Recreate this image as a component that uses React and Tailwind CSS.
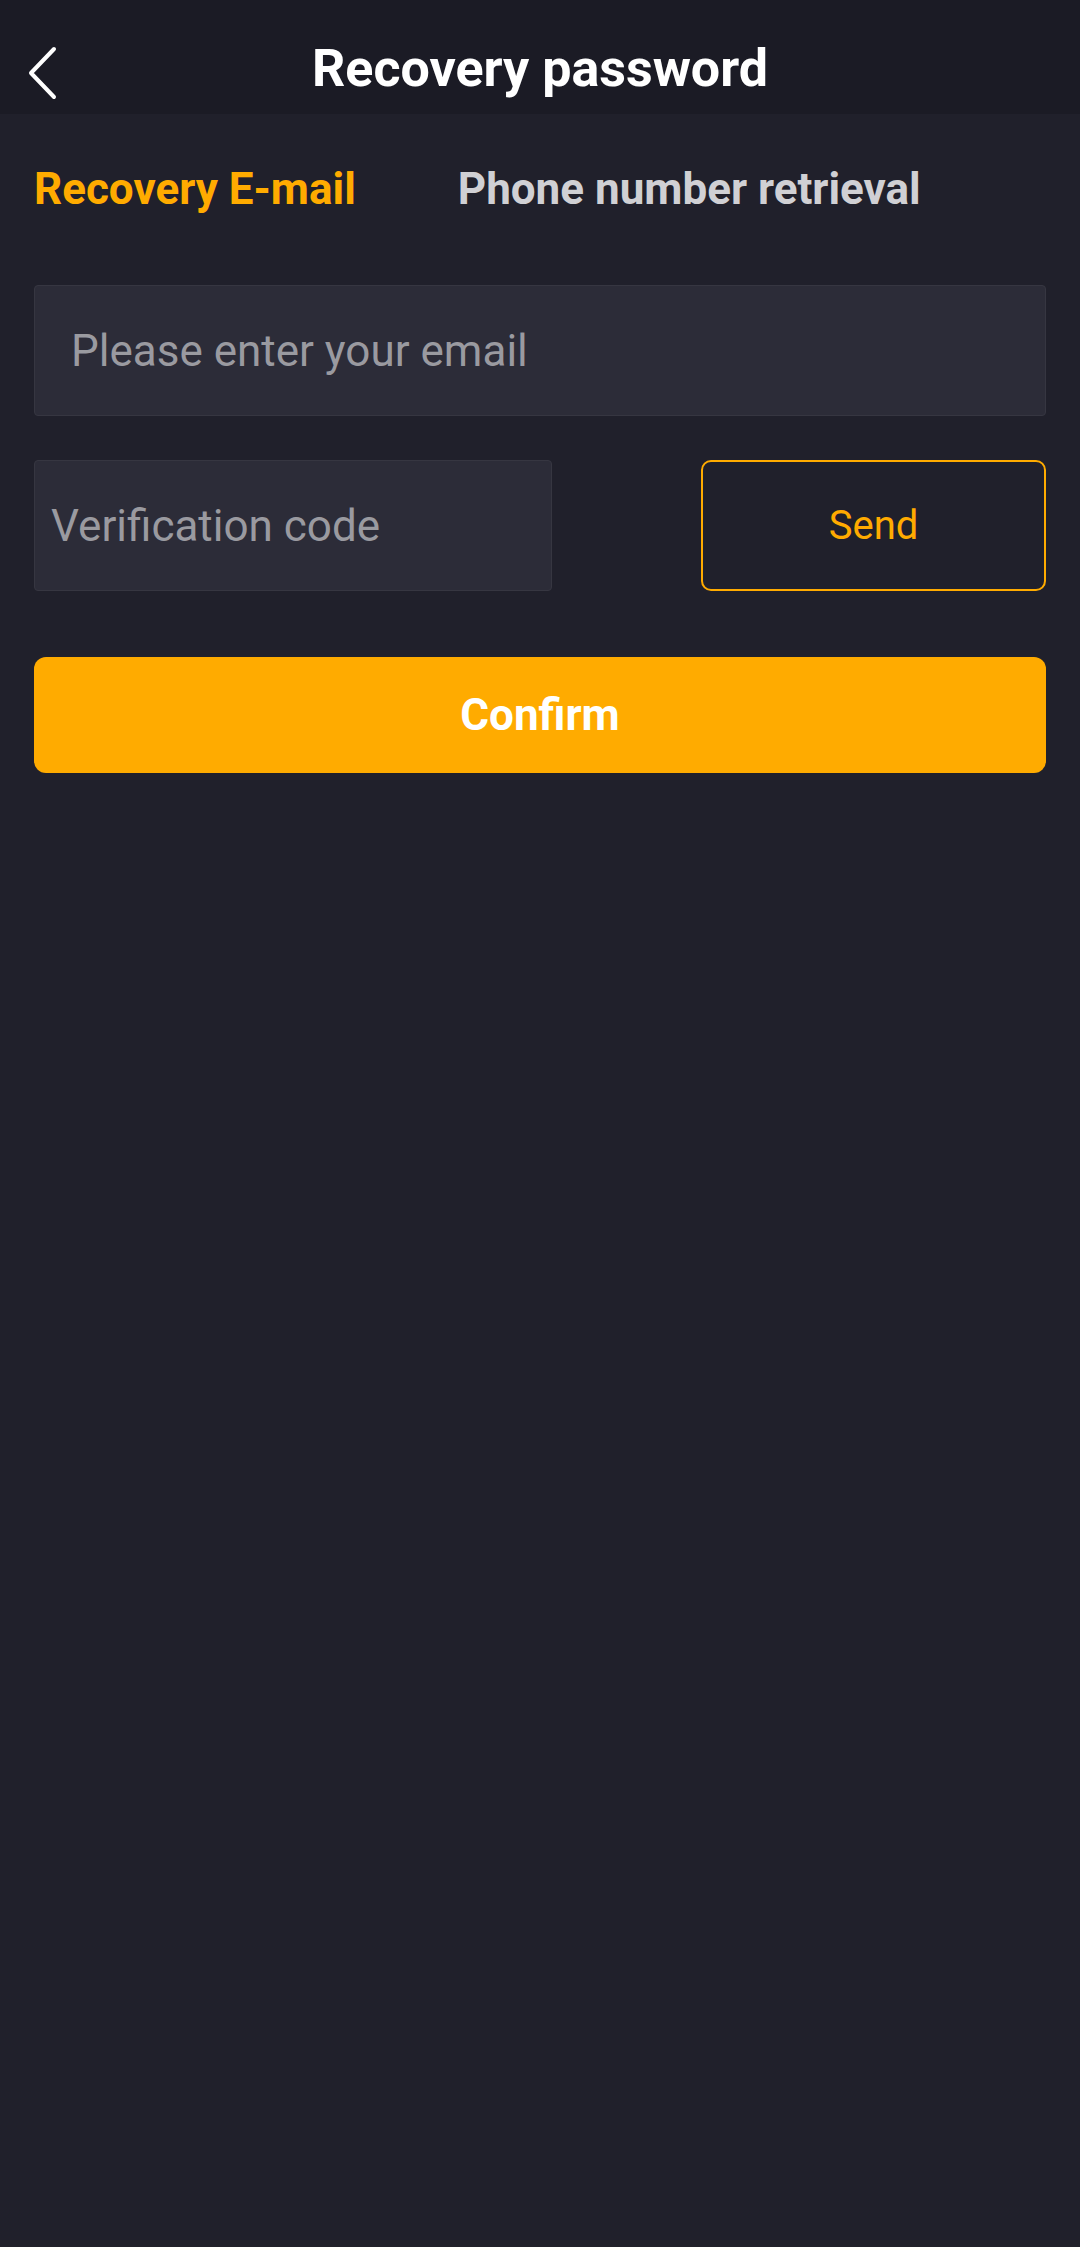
import React, { useState } from 'react';

const App = () => {
  const [tab, setTab] = useState('email');

  return (
    <div className="min-h-[2247px] w-[1080px] bg-[#20202b]" style={{ fontFamily: 'Roboto, "Liberation Sans", sans-serif' }}>
      {/* Header */}
      <div className="relative flex h-[114px] items-center justify-center bg-[#1b1b25] pt-[24px]">
        <button className="absolute left-[22px] top-[42px] p-1" aria-label="Back">
          <svg width="32" height="54" viewBox="0 0 32 54" fill="none">
            <path d="M28 3 L5 27 L28 51" stroke="#ffffff" strokeWidth="4" strokeLinecap="round" strokeLinejoin="round" />
          </svg>
        </button>
        <h1 className="text-[52px] font-bold text-white">Recovery password</h1>
      </div>

      {/* Tabs */}
      <div className="flex items-center gap-[102px] px-[34px] pt-[42px]">
        <button
          onClick={() => setTab('email')}
          className={`text-[44px] font-bold ${tab === 'email' ? 'text-[#ffab00]' : 'text-[#d0d0d4]'}`}
        >
          Recovery E-mail
        </button>
        <button
          onClick={() => setTab('phone')}
          className={`text-[44px] font-bold ${tab === 'phone' ? 'text-[#ffab00]' : 'text-[#d0d0d4]'}`}
        >
          Phone number retrieval
        </button>
      </div>

      {/* Form */}
      <div className="flex flex-col px-[34px] pt-[63px]">
        <div className="flex h-[131px] items-center rounded-[4px] border border-[#363641] bg-[#2c2c38] px-[36px]">
          <input
            className="w-full bg-transparent text-[44px] text-white outline-none placeholder:text-[#9a9aa0]"
            placeholder="Please enter your email"
          />
        </div>

        <div className="mt-[44px] flex items-center justify-between">
          <div className="flex h-[131px] w-[518px] items-center rounded-[4px] border border-[#363641] bg-[#2c2c38] px-[16px]">
            <input
              className="w-full bg-transparent text-[44px] text-white outline-none placeholder:text-[#9a9aa0]"
              placeholder="Verification code"
            />
          </div>
          <button className="flex h-[131px] w-[345px] items-center justify-center rounded-[10px] border-2 border-[#ffab00] text-[40px] text-[#ffab00]">
            Send
          </button>
        </div>

        <button className="mt-[66px] flex h-[116px] items-center justify-center rounded-[12px] bg-[#ffab00] text-[44px] font-bold text-white">
          Confirm
        </button>
      </div>
    </div>
  );
};

export default App;
